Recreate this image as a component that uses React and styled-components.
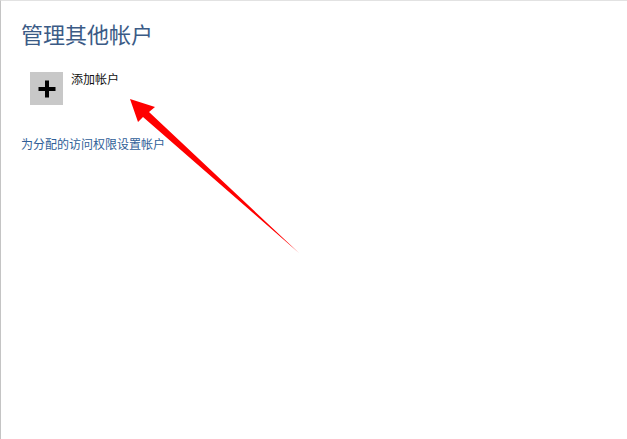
import React from "react";
import styled, { createGlobalStyle } from "styled-components";

const Global = createGlobalStyle`
  html, body { margin: 0; padding: 0; background: #fff; }
  body { font-family: "Noto Sans CJK SC", "Noto Sans", sans-serif; }
`;

const Page = styled.div`
  position: relative;
  width: 627px;
  height: 439px;
  box-sizing: border-box;
  border-left: 1px solid #c4c4c4;
  border-top: 1px solid #e2e2e2;
  padding: 17px 0 0 20px;
  overflow: hidden;
`;

const Title = styled.h1`
  margin: 0;
  font-size: 22px;
  font-weight: 400;
  line-height: 30px;
  color: #3b5b86;
`;

const AddRow = styled.div`
  display: flex;
  align-items: flex-start;
  gap: 8px;
  margin: 24px 0 0 9px;
`;

const Tile = styled.div`
  width: 33px;
  height: 33px;
  background: #c8c8c8;
  display: flex;
  align-items: center;
  justify-content: center;
`;

const AddLabel = styled.span`
  font-size: 12px;
  line-height: 14px;
  color: #111;
`;

const Link = styled.a`
  display: block;
  margin-top: 31px;
  font-size: 12px;
  line-height: 16px;
  color: #2f5e98;
  text-decoration: none;
`;

const Arrow = styled.svg`
  position: absolute;
  left: 0;
  top: 0;
  pointer-events: none;
`;

export default function App() {
  return (
    <>
      <Global />
      <Page>
        <Title>管理其他帐户</Title>
        <AddRow>
          <Tile>
            <svg width="18" height="18" viewBox="0 0 18 18">
              <rect x="7" y="0.5" width="4" height="17" fill="#000" />
              <rect x="0.5" y="7" width="17" height="4" fill="#000" />
            </svg>
          </Tile>
          <AddLabel>添加帐户</AddLabel>
        </AddRow>
        <Link href="#">为分配的访问权限设置帐户</Link>
        <Arrow width="627" height="439" viewBox="0 0 627 439">
          <polygon
            points="129,98 154,106 148,111 298,252 142,116 137,121"
            fill="#ff0000"
          />
        </Arrow>
      </Page>
    </>
  );
}
